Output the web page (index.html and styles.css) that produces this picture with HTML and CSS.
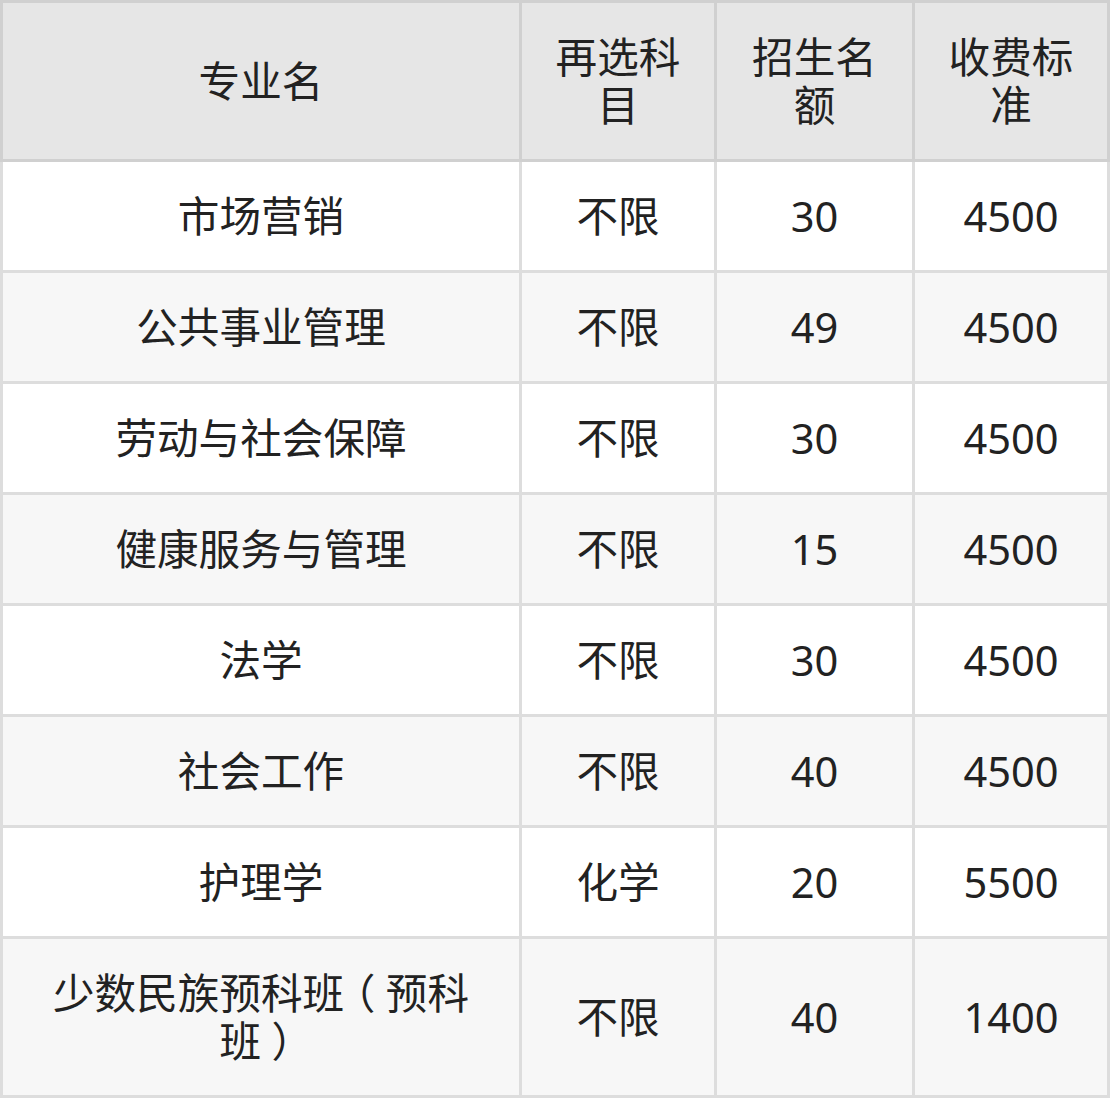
FILE: index.html
```html
<!DOCTYPE html>
<html lang="zh-CN">
<head>
<meta charset="utf-8">
<title>招生计划</title>
<link rel="stylesheet" href="styles.css">
</head>
<body>
<table class="plan">
  <colgroup>
    <col class="c1"><col class="c2"><col class="c3"><col class="c4">
  </colgroup>
  <thead>
    <tr><th>专业名</th><th>再选科目</th><th>招生名额</th><th>收费标准</th></tr>
  </thead>
  <tbody>
    <tr><td>市场营销</td><td>不限</td><td>30</td><td>4500</td></tr>
    <tr><td>公共事业管理</td><td>不限</td><td>49</td><td>4500</td></tr>
    <tr><td>劳动与社会保障</td><td>不限</td><td>30</td><td>4500</td></tr>
    <tr><td>健康服务与管理</td><td>不限</td><td>15</td><td>4500</td></tr>
    <tr><td>法学</td><td>不限</td><td>30</td><td>4500</td></tr>
    <tr><td>社会工作</td><td>不限</td><td>40</td><td>4500</td></tr>
    <tr><td>护理学</td><td>化学</td><td>20</td><td>5500</td></tr>
    <tr><td>少数民族预科班<span class="paren">（</span>预科班<span class="paren">）</span></td><td>不限</td><td>40</td><td>1400</td></tr>
  </tbody>
</table>
</body>
</html>
```

FILE: styles.css
```css
html, body {
  margin: 0;
  padding: 0;
  background: #ffffff;
}

.plan {
  width: 1110px;
  table-layout: fixed;
  border-collapse: separate;
  border-spacing: 0;
  font-family: "Noto Sans", "Noto Sans CJK SC", sans-serif;
  font-size: 41.6px;
  line-height: 48px;
  color: #222222;
}

.c1 { width: 522px; }
.c2 { width: 195px; }
.c3 { width: 198px; }
.c4 { width: 195px; }

.plan th,
.plan td {
  box-sizing: border-box;
  height: 111px;
  padding: 30px 30px;
  text-align: center;
  vertical-align: middle;
  font-weight: 400;
  border-right: 3px solid #dddddd;
  border-bottom: 3px solid #dddddd;
}

.plan th:first-child,
.plan td:first-child {
  border-left: 3px solid #dddddd;
}

.plan th {
  background: #e6e6e6;
  border-color: #d0d0d0;
  border-top: 3px solid #d0d0d0;
}

.plan th:first-child {
  border-left-color: #d0d0d0;
}

.plan tbody tr:nth-child(odd) td {
  background: #ffffff;
}

.plan tbody tr:nth-child(even) td {
  background: #f7f7f7;
}

.paren {
  display: inline-block;
  width: 1em;
  height: 48px;
  text-align: center;
  vertical-align: top;
  font-feature-settings: "halt";
  text-spacing-trim: space-all;
}
```
